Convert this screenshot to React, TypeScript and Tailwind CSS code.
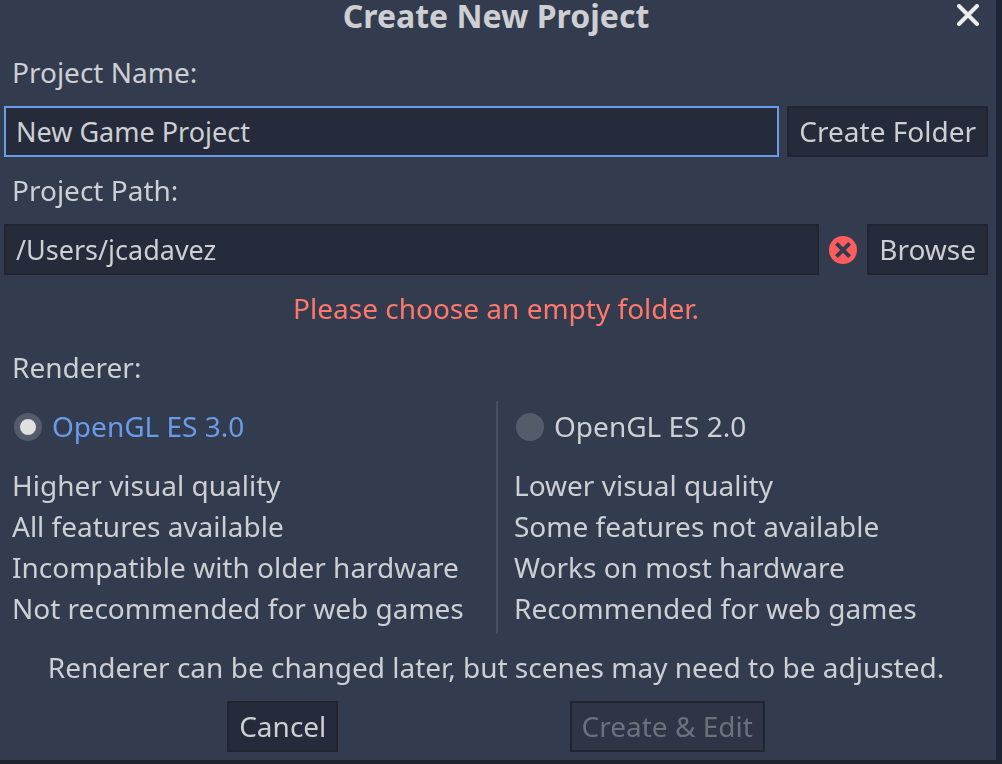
import { useState } from "react";

const RENDERERS = [
  {
    id: "gles3",
    name: "OpenGL ES 3.0",
    notes: [
      "Higher visual quality",
      "All features available",
      "Incompatible with older hardware",
      "Not recommended for web games",
    ],
  },
  {
    id: "gles2",
    name: "OpenGL ES 2.0",
    notes: [
      "Lower visual quality",
      "Some features not available",
      "Works on most hardware",
      "Recommended for web games",
    ],
  },
];

const buttonStyle =
  "h-[51px] shrink-0 border-2 border-[#212532] bg-[#262b3b] px-2.5 leading-[47px] disabled:bg-[#2f3447] disabled:text-[#6d717c]";
const fieldStyle =
  "h-[51px] min-w-0 flex-1 border-2 border-[#212532] bg-[#262b3b] px-2.5 text-[27px] leading-[47px] outline-none focus:border-[#699ce8]";
const labelStyle = "px-2 leading-[51px]";

export default function App() {
  const [name, setName] = useState("New Game Project");
  const [path, setPath] = useState("/Users/jcadavez");
  const [renderer, setRenderer] = useState("gles3");

  return (
    <main className="min-h-screen bg-[#1f2430] pr-1.5 pb-1 font-['Noto_Sans',sans-serif] text-[28px] text-[#cdcfd2]">
      <form
        role="dialog"
        aria-labelledby="dialog-title"
        onSubmit={(e) => e.preventDefault()}
        className="flex flex-col gap-2 bg-[#333b4f] pb-2 pl-1 pr-2"
      >
        <header className="grid grid-cols-[48px_1fr_48px] items-start">
          <h1
            id="dialog-title"
            className="col-start-2 h-[39px] text-center text-[32px] leading-8 font-bold"
          >
            Create New Project
          </h1>
          <button type="button" aria-label="Close" className="mt-1 mr-2 justify-self-end">
            <svg width="24" height="24" viewBox="0 0 24 24" fill="none" stroke="#ececec" strokeWidth="4" strokeLinecap="round">
              <path d="M3 2 21 20M21 2 3 20" />
            </svg>
          </button>
        </header>

        <label htmlFor="project-name" className={labelStyle}>
          Project Name:
        </label>
        <div className="flex gap-2">
          <input
            id="project-name"
            autoFocus
            value={name}
            onChange={(e) => setName(e.target.value)}
            className={fieldStyle}
          />
          <button type="button" className={buttonStyle}>
            Create Folder
          </button>
        </div>

        <label htmlFor="project-path" className={labelStyle}>
          Project Path:
        </label>
        <div className="flex items-center gap-2">
          <input
            id="project-path"
            value={path}
            onChange={(e) => setPath(e.target.value)}
            className={fieldStyle}
          />
          <svg width="32" height="32" viewBox="0 0 32 32" className="shrink-0" aria-hidden="true">
            <circle cx="16" cy="16" r="14" fill="#ff5d5d" />
            <path d="M9.4 9.4 22.6 22.6M22.6 9.4 9.4 22.6" stroke="#333b4f" strokeWidth="4" />
          </svg>
          <button type="button" className={buttonStyle}>
            Browse
          </button>
        </div>

        <p role="alert" className="text-center leading-[51px] text-[#ff786b]">
          Please choose an empty folder.
        </p>

        <fieldset>
          <legend className={`${labelStyle} mb-2`}>Renderer:</legend>
          <div className="grid grid-cols-2">
            {RENDERERS.map((r) => (
              <div
                key={r.id}
                className="flex flex-col gap-[13px] pr-2 pb-[5px] pl-2 even:border-l-2 even:border-[#475063] even:pl-4"
              >
                <label
                  htmlFor={r.id}
                  className="flex items-center gap-2.5 pl-0.5 leading-[51px] has-checked:text-[#699ce8]"
                >
                  <input
                    id={r.id}
                    type="radio"
                    name="renderer"
                    checked={renderer === r.id}
                    onChange={() => setRenderer(r.id)}
                    className="size-7 shrink-0 appearance-none rounded-full border-6 border-[#545b6b] bg-[#545b6b] checked:bg-[#e0e0e0]"
                  />
                  {r.name}
                </label>
                <ul className="leading-[41px]">
                  {r.notes.map((note) => (
                    <li key={note}>{note}</li>
                  ))}
                </ul>
              </div>
            ))}
          </div>
        </fieldset>

        <p className="text-center leading-[51px]">
          Renderer can be changed later, but scenes may need to be adjusted.
        </p>

        <footer className="flex justify-evenly gap-2">
          <button type="button" className={buttonStyle}>
            Cancel
          </button>
          <button type="submit" disabled className={buttonStyle}>
            Create &amp; Edit
          </button>
        </footer>
      </form>
    </main>
  );
}
